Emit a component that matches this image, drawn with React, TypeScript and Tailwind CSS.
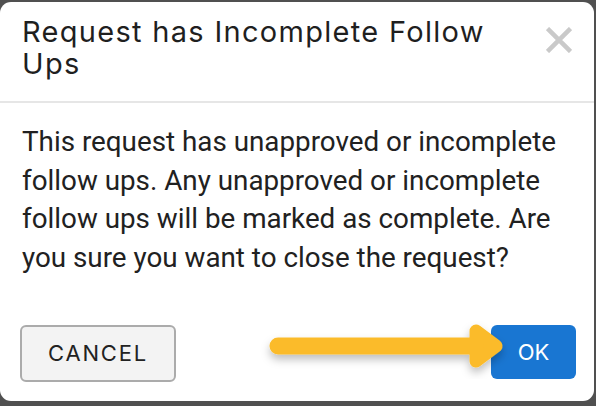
import React from 'react';

const TITLE_FONT = { fontFamily: 'Inter, "Noto Sans", sans-serif' };
const BODY_FONT = { fontFamily: 'Roboto, "Noto Sans", sans-serif' };

function CloseIcon() {
    return (
        <svg width="26" height="26" viewBox="0 0 26 26" className="block">
            <path d="M1.5 1.5 L24.5 24.5 M24.5 1.5 L1.5 24.5" stroke="#c9c9c9" strokeWidth="4.5" />
        </svg>
    );
}

function PointerArrow() {
    return (
        <svg width="250" height="60" viewBox="0 0 250 60" className="absolute left-[262px] top-[316px] overflow-visible">
            <defs>
                <filter id="arrowShadow" x="-10%" y="-40%" width="120%" height="200%">
                    <feDropShadow dx="0" dy="5" stdDeviation="4" floodColor="#000" floodOpacity="0.25" />
                </filter>
            </defs>
            <g filter="url(#arrowShadow)" fill="#fbbb2a" stroke="#fbbb2a" strokeLinecap="round" strokeLinejoin="round">
                <line x1="16" y1="30" x2="228" y2="30" strokeWidth="17" fill="none" />
                <path d="M214 15 L234 30 L214 45 Z" strokeWidth="13" />
            </g>
        </svg>
    );
}

export default function App() {
    return (
        <div className="relative w-[596px] h-[406px] bg-[#505050] overflow-hidden">
            <div className="mt-[2px] w-[594px] h-[399px] bg-white rounded-[11px] flex flex-col">
                <div className="flex items-start justify-between pl-[22px] pr-[22px] pt-[14px] pb-[21px] border-b-2 border-[#e6e6e6]">
                    <h2 className="text-[29px] leading-[32px] tracking-[1.3px] text-[#1f1f1f] w-[490px]" style={TITLE_FONT}>
                        Request has Incomplete Follow Ups
                    </h2>
                    <div className="mt-[11px]">
                        <CloseIcon />
                    </div>
                </div>
                <p className="pl-[22px] pr-[36px] pt-[20px] text-[27.8px] leading-[38.5px] text-[#212121]" style={BODY_FONT}>
                    This request has unapproved or incomplete follow ups. Any unapproved or incomplete follow ups will be marked as complete. Are you sure you want to close the request?
                </p>
                <div className="mt-auto mb-[19px] flex items-start justify-between pl-[20px] pr-[18px]">
                    <button className="w-[156px] h-[57px] rounded-[6px] border-2 border-[#ababab] bg-[#f3f3f3] text-[22px] tracking-[1.8px] text-[#222]" style={TITLE_FONT}>
                        CANCEL
                    </button>
                    <button className="w-[85px] h-[54px] rounded-[6px] bg-[#1976d2] text-[22px] text-white" style={TITLE_FONT}>
                        OK
                    </button>
                </div>
            </div>
            <PointerArrow />
        </div>
    );
}
